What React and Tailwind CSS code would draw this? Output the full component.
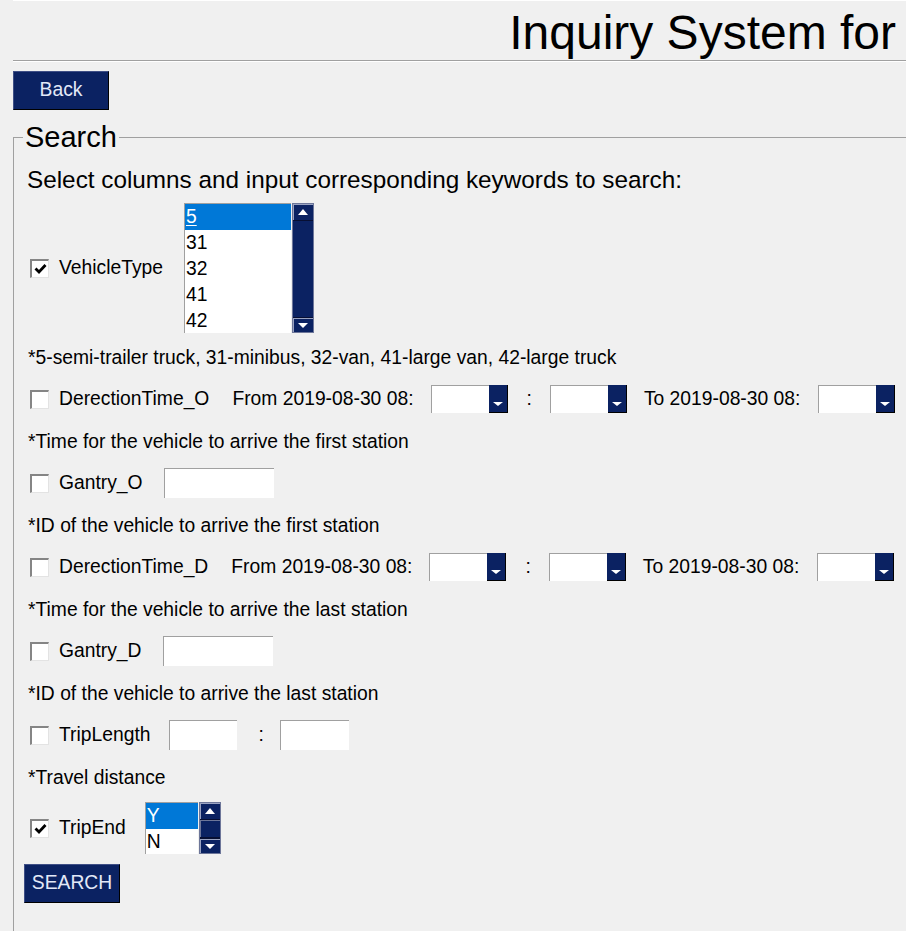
import React from 'react';

const UpTri = () => (
    <svg width="10" height="6" viewBox="0 0 10 6"><polygon points="0,6 10,6 5,0" fill="#fff" /></svg>
);

const DownTri = () => (
    <svg width="10" height="5" viewBox="0 0 10 5"><polygon points="0,0 10,0 5,5" fill="#fff" /></svg>
);

const Checkbox = ({ checked }) => (
    <span className="ml-[7px] flex h-[19px] w-[19px] shrink-0 items-center justify-center border-t-2 border-l-2 border-[#858585] border-r border-b border-r-[#e3e3e3] border-b-[#e3e3e3] bg-white">
        {checked && (
            <svg width="13" height="12" viewBox="0 0 13 12">
                <polyline points="1.5,5.5 5,9 11.5,2" fill="none" stroke="#000" strokeWidth="2.8" />
            </svg>
        )}
    </span>
);

const Dropdown = ({ className = '' }) => (
    <div className={`flex h-[28px] w-[77px] ${className}`}>
        <div className="flex-1 border-t border-l border-[#a0a0a0] bg-white" />
        <div className="flex w-[19px] items-end justify-center border-r border-b border-black bg-[#0b2262] pb-[6px]">
            <svg width="10" height="4" viewBox="0 0 10 4"><polygon points="0,0 10,0 5,4" fill="#fff" /></svg>
        </div>
    </div>
);

const TextInput = ({ w, className = '' }) => (
    <div className={`h-[30px] border-t border-l border-[#a0a0a0] bg-white ${w} ${className}`} />
);

const ListBox = ({ items, className, small }) => (
    <div className={`flex ${className}`}>
        <div className="flex-1 border-t border-l border-[#a0a0a0] bg-white">
            {items.map((it, i) => (
                <div
                    key={it}
                    className={`h-[26px] pl-[1px] leading-[26px] ${i === 0 ? 'bg-[#0078d7] text-white' : 'text-black'} ${i === 0 && !small ? 'underline underline-offset-2' : ''}`}
                >
                    {it}
                </div>
            ))}
        </div>
        <div className="ml-[1px] flex w-[22px] flex-col border border-[#6d7699] bg-[#0b2262]">
            <div className="flex h-[17px] items-center justify-center border-b border-[#070f33] shadow-[inset_1px_1px_0_#9aa3c2]">
                <UpTri />
            </div>
            {small ? (
                <div className="flex-1 border-b border-[#070f33] shadow-[inset_1px_1px_0_#6d7699]" />
            ) : (
                <div className="flex-1" />
            )}
            <div className="flex h-[15px] items-center justify-center border-t border-[#070f33] shadow-[inset_1px_1px_0_#9aa3c2]">
                <DownTri />
            </div>
        </div>
    </div>
);

const Note = ({ children, className = '' }) => (
    <p className={`ml-[5px] h-[28px] leading-[28px] ${className}`}>{children}</p>
);

const NavyButton = ({ children, className = '' }) => (
    <button className={`h-[39px] w-[96px] border border-[#3f4f86] border-r-black border-b-black bg-[#0b2262] text-[#e3e9f8] ${className}`}>
        {children}
    </button>
);

const TimeRow = ({ label, className }) => (
    <div className={`flex h-[28px] items-center ${className}`}>
        <Checkbox />
        <span className="ml-[10px]">{label}</span>
        <span className="ml-[23px]">From 2019-08-30 08:</span>
        <Dropdown className="ml-[17px]" />
        <span className="ml-[19px]">:</span>
        <Dropdown className="ml-[18px]" />
        <span className="ml-[17px]">To 2019-08-30 08:</span>
        <Dropdown className="ml-[18px]" />
    </div>
);

export default function App() {
    return (
        <div className="h-screen w-screen overflow-hidden bg-[#f0f0f0] font-['Liberation_Sans',Arial,sans-serif] text-[19.3px] text-black">
            {/* Header */}
            <div className="ml-[13px] h-[61px] border-t border-white border-b border-b-[#a0a0a0] pt-[8px] pr-[10px] text-right text-[48px] leading-[48px] shadow-[0_1px_0_#ffffff]">
                Inquiry System for
            </div>

            <NavyButton className="ml-[13px] mt-[10px]">Back</NavyButton>

            {/* Search panel */}
            <fieldset className="ml-[13px] mt-[11px] w-[1000px] border border-[#a0a0a0] pl-[9px] pb-[40px]">
                <legend className="px-[2px] text-[29px] leading-[32px]">Search</legend>

                <p className="ml-[4px] mt-[13px] h-[28px] text-[24.3px] leading-[28px]">
                    Select columns and input corresponding keywords to search:
                </p>

                <div className="mt-[9px] flex h-[130px] items-center">
                    <Checkbox checked />
                    <span className="ml-[10px]">VehicleType</span>
                    <ListBox items={['5', '31', '32', '41', '42']} className="ml-[21px] h-[130px] w-[130px]" />
                </div>

                <Note className="mt-[11px]">*5-semi-trailer truck, 31-minibus, 32-van, 41-large van, 42-large truck</Note>

                <TimeRow label="DerectionTime_O" className="mt-[13px]" />

                <Note className="mt-[15px]">*Time for the vehicle to arrive the first station</Note>

                <div className="mt-[12px] flex h-[30px] items-center">
                    <Checkbox />
                    <span className="ml-[10px]">Gantry_O</span>
                    <TextInput w="w-[110px]" className="ml-[21px]" />
                </div>

                <Note className="mt-[14px]">*ID of the vehicle to arrive the first station</Note>

                <TimeRow label="DerectionTime_D" className="mt-[13px]" />

                <Note className="mt-[15px]">*Time for the vehicle to arrive the last station</Note>

                <div className="mt-[12px] flex h-[30px] items-center">
                    <Checkbox />
                    <span className="ml-[10px]">Gantry_D</span>
                    <TextInput w="w-[110px]" className="ml-[21px]" />
                </div>

                <Note className="mt-[14px]">*ID of the vehicle to arrive the last station</Note>

                <div className="mt-[12px] flex h-[30px] items-center">
                    <Checkbox />
                    <span className="ml-[10px]">TripLength</span>
                    <TextInput w="w-[68px]" className="ml-[19px]" />
                    <span className="ml-[21px]">:</span>
                    <TextInput w="w-[69px]" className="ml-[16px]" />
                </div>

                <Note className="mt-[14px]">*Travel distance</Note>

                <div className="mt-[10px] flex h-[52px] items-center">
                    <Checkbox checked />
                    <span className="ml-[10px]">TripEnd</span>
                    <ListBox items={['Y', 'N']} small className="ml-[19px] h-[52px] w-[76px]" />
                </div>

                <NavyButton className="ml-[1px] mt-[10px]">SEARCH</NavyButton>
            </fieldset>
        </div>
    );
}
